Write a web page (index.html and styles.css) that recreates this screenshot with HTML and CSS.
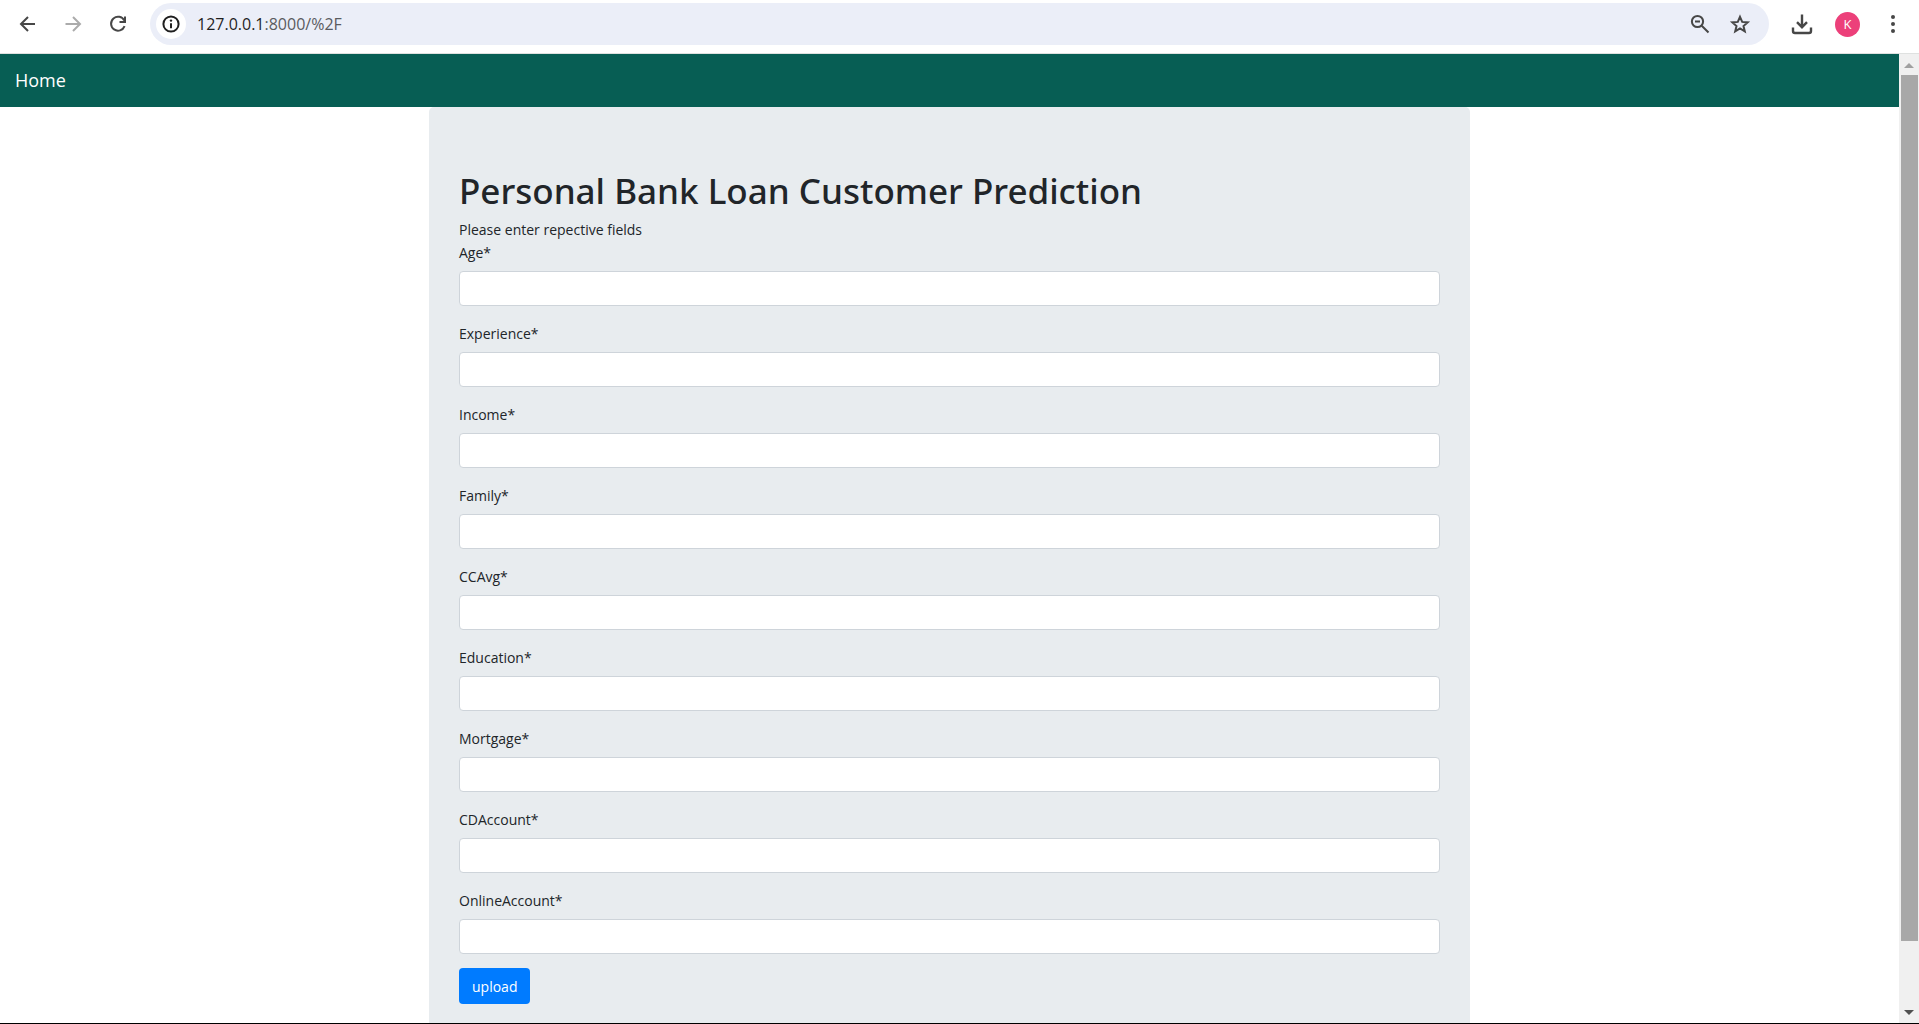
FILE: index.html
```html
<!DOCTYPE html>
<html lang="en">
<head>
<meta charset="utf-8">
<meta name="viewport" content="width=device-width, initial-scale=1">
<title>Personal Bank Loan Customer Prediction</title>
<link rel="stylesheet" href="styles.css">
</head>
<body>
<header class="toolbar">
  <div class="nav-buttons">
    <button class="icon-btn" type="button" aria-label="Back"><svg width="24" height="24" viewBox="0 0 24 24"><path class="line" d="M19 12H5.500M12 5l-7 7 7 7"/></svg></button>
    <button class="icon-btn faded" type="button" aria-label="Forward"><svg width="24" height="24" viewBox="0 0 24 24"><path class="line" d="M4.500 12h14M12 5l7 7-7 7"/></svg></button>
    <button class="icon-btn" type="button" aria-label="Reload"><svg width="24" height="24" viewBox="0 0 24 24"><path class="line" d="M18.300 8.500A7 7 0 1 0 18.600 14.200M19 4.500V10H13.500"/></svg></button>
  </div>
  <div class="omnibox">
    <button class="site-info" type="button" aria-label="Site information"><svg width="20" height="20" viewBox="0 0 20 20"><circle class="line" cx="10" cy="10" r="7.600"/><path class="line" d="M10 9.200v5"/><circle cx="10" cy="6.600" r="1.200"/></svg></button>
    <div class="url">127.0.0.1<span class="path">:8000/%2F</span></div>
    <div class="actions">
      <button class="icon-btn" type="button" aria-label="Zoom"><svg width="24" height="24" viewBox="0 0 24 24"><circle class="line" cx="9.500" cy="9.500" r="5.600"/><path class="line" d="M13.700 13.700l6.800 6.800M7 9.500h5"/></svg></button>
      <button class="icon-btn" type="button" aria-label="Bookmark"><svg width="24" height="24" viewBox="0 0 24 24"><path class="line" d="M12 4.800l2.200 5.100 5.500.5-4.200 3.600 1.300 5.400-4.800-2.900-4.800 2.900 1.300-5.400-4.200-3.600 5.500-.5z"/></svg></button>
    </div>
  </div>
  <div class="tools">
    <button class="icon-btn" type="button" aria-label="Downloads"><svg width="24" height="24" viewBox="0 0 24 24"><path class="line thick" d="M12 2.500V15M7 10.200l5 5 5-5M3 15.500V19q0 2 2 2h14q2 0 2-2v-3.500"/></svg></button>
    <button class="avatar" type="button">K</button>
    <button class="icon-btn" type="button" aria-label="Menu"><svg width="24" height="24" viewBox="0 0 24 24"><circle cx="12" cy="5" r="2"/><circle cx="12" cy="12" r="2"/><circle cx="12" cy="19" r="2"/></svg></button>
  </div>
</header>
<div class="viewport">
  <div class="page">
    <nav class="navbar"><a href="#">Home</a></nav>
    <main class="panel">
      <h1>Personal Bank Loan Customer Prediction</h1>
      <form>
        <p>Please enter repective fields</p>
        <div class="field"><label for="age">Age*</label><input id="age" type="text"></div>
        <div class="field"><label for="experience">Experience*</label><input id="experience" type="text"></div>
        <div class="field"><label for="income">Income*</label><input id="income" type="text"></div>
        <div class="field"><label for="family">Family*</label><input id="family" type="text"></div>
        <div class="field"><label for="ccavg">CCAvg*</label><input id="ccavg" type="text"></div>
        <div class="field"><label for="education">Education*</label><input id="education" type="text"></div>
        <div class="field"><label for="mortgage">Mortgage*</label><input id="mortgage" type="text"></div>
        <div class="field"><label for="cdaccount">CDAccount*</label><input id="cdaccount" type="text"></div>
        <div class="field"><label for="onlineaccount">OnlineAccount*</label><input id="onlineaccount" type="text"></div>
        <button class="upload" type="submit">upload</button>
      </form>
    </main>
  </div>
  <div class="scrollbar" aria-hidden="true">
    <svg width="20" height="21" viewBox="0 0 20 21"><path fill="#a0a0a0" d="M10 9l5 5H5z"/></svg>
    <div class="track"><div class="thumb"></div></div>
    <svg width="20" height="21" viewBox="0 0 20 21"><path fill="#505050" d="M5 8h10l-5 5z"/></svg>
  </div>
</div>
</body>
</html>
```
FILE: styles.css
```css
* { box-sizing: border-box; }

body {
  margin: 0;
  height: 100vh;
  display: flex;
  flex-direction: column;
  overflow: hidden;
  border-bottom: 1px solid #000;
  background: #fff;
  color: #212529;
  font: 14px/23px "Open Sans", "Noto Sans", sans-serif;
}

button {
  border: 0;
  padding: 0;
  background: none;
  color: inherit;
  font-family: inherit;
}

svg { display: block; fill: currentColor; }

.line { fill: none; stroke: currentColor; stroke-width: 2; }
.thick { stroke-width: 2.400; }

/* Browser toolbar */
.toolbar {
  flex: none;
  display: flex;
  align-items: center;
  height: 54px;
  padding: 0 14px 5px 16px;
  border-bottom: 1px solid #dfe1e0;
  color: #474747;
}

.nav-buttons { display: flex; gap: 21px; width: 134px; }
.faded { color: #ababab; }

.omnibox {
  flex: 1;
  display: flex;
  align-items: center;
  gap: 11px;
  height: 42px;
  padding: 0 17px 0 6px;
  border-radius: 21px;
  background: #ebeef8;
}

.actions { display: flex; gap: 16px; }

.site-info {
  display: grid;
  place-items: center;
  width: 30px;
  height: 30px;
  border-radius: 50%;
  background: #fff;
  color: #1f1f1f;
}

.url {
  flex: 1;
  color: #1f1f1f;
  font-size: 16px;
}
.path { color: #5a5b60; }

.tools { display: flex; align-items: center; gap: 21px; margin-left: 21px; }

.avatar {
  width: 25px;
  height: 25px;
  border-radius: 50%;
  background: #ec407a;
  color: #fff;
  font-size: 13px;
}

/* Page area */
.viewport { flex: 1; display: flex; min-height: 0; }
.page { flex: 1; overflow: hidden; }

.navbar {
  height: 53px;
  padding: 15px;
  background: #075e54;
}
.navbar a { color: #fff; font-size: 18px; text-decoration: none; }

.panel {
  max-width: 1041px;
  margin: 0 auto;
  padding: 62px 30px;
  border-radius: 5px;
  background: #e8ecef;
}

h1 {
  margin: 0 0 5px;
  font-family: "Noto Sans", "Open Sans", sans-serif;
  font-size: 35px;
  font-weight: 500;
  line-height: 44px;
}

p { margin: 0; }

.field { margin-bottom: 16px; }
.field:last-of-type { margin-bottom: 14px; }
.field label { display: block; margin-bottom: 7px; }
.field input {
  display: block;
  width: 100%;
  height: 35px;
  padding: 6px 12px;
  border: 1px solid #ced4da;
  border-radius: 4px;
  background: #fff;
  font: inherit;
}

.upload {
  height: 36px;
  padding: 0 13px;
  border-radius: 4px;
  background: #007bff;
  color: #fff;
  font-size: 14px;
}

/* Scrollbar */
.scrollbar {
  display: flex;
  flex-direction: column;
  width: 20px;
  background: #f0f0f0;
}
.track { flex: 1; padding: 0 1px 61px 2px; }
.thumb { height: 100%; background: #a8a8a8; }
```
